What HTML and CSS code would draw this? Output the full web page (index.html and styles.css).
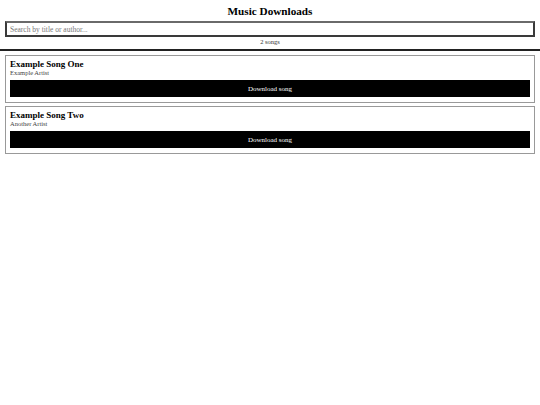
FILE: index.html
```html
<!DOCTYPE html>
<html lang="en">
<head>
<meta charset="utf-8">
<title>Music Downloads</title>
<link rel="stylesheet" href="styles.css">
</head>
<body>
<header class="top">
  <h1 class="top__title">Music Downloads</h1>
  <input class="top__search" type="text" placeholder="Search by title or author...">
  <div class="top__count">2 songs</div>
</header>
<main class="songs">
  <section class="song">
    <h2 class="song__title">Example Song One</h2>
    <div class="song__artist">Example Artist</div>
    <button class="song__download" type="button">Download song</button>
  </section>
  <section class="song">
    <h2 class="song__title">Example Song Two</h2>
    <div class="song__artist">Another Artist</div>
    <button class="song__download" type="button">Download song</button>
  </section>
</main>
</body>
</html>
```
FILE: styles.css
```css
* {
  box-sizing: border-box;
}

body {
  margin: 0;
  background: #fff;
  color: #000;
  font-family: "Liberation Serif", "DejaVu Serif", serif;
}

.top {
  padding: 5px 5px 3px;
  border-bottom: 2px solid #222;
  text-align: center;
}

.top__title {
  margin: 0 0 4px;
  font-size: 11.2px;
  line-height: 12px;
  font-weight: bold;
}

.top__search {
  display: block;
  width: 100%;
  height: 16px;
  margin: 0;
  padding: 0 3px;
  border: 2px solid #3a3a3a;
  border-top-color: #6a6a6a;
  border-radius: 0;
  font-family: inherit;
  font-size: 7.5px;
  color: #000;
  background: #fff;
  outline: none;
}

.top__search::placeholder {
  color: #777;
}

.top__count {
  margin-top: 1px;
  font-size: 6.5px;
  line-height: 8px;
  color: #333;
}

.songs {
  display: flex;
  flex-direction: column;
  gap: 3px;
  padding: 4px 5px;
}

.song {
  border: 1px solid #999;
  padding: 3px 4px 5px;
}

.song__title {
  margin: 0;
  font-size: 9px;
  line-height: 10px;
  font-weight: bold;
}

.song__artist {
  font-size: 6.5px;
  line-height: 8px;
  color: #444;
}

.song__download {
  display: block;
  width: 100%;
  height: 17px;
  margin-top: 3px;
  border: none;
  border-radius: 0;
  background: #000;
  color: #fff;
  font-family: inherit;
  font-size: 7px;
  cursor: pointer;
}
```
